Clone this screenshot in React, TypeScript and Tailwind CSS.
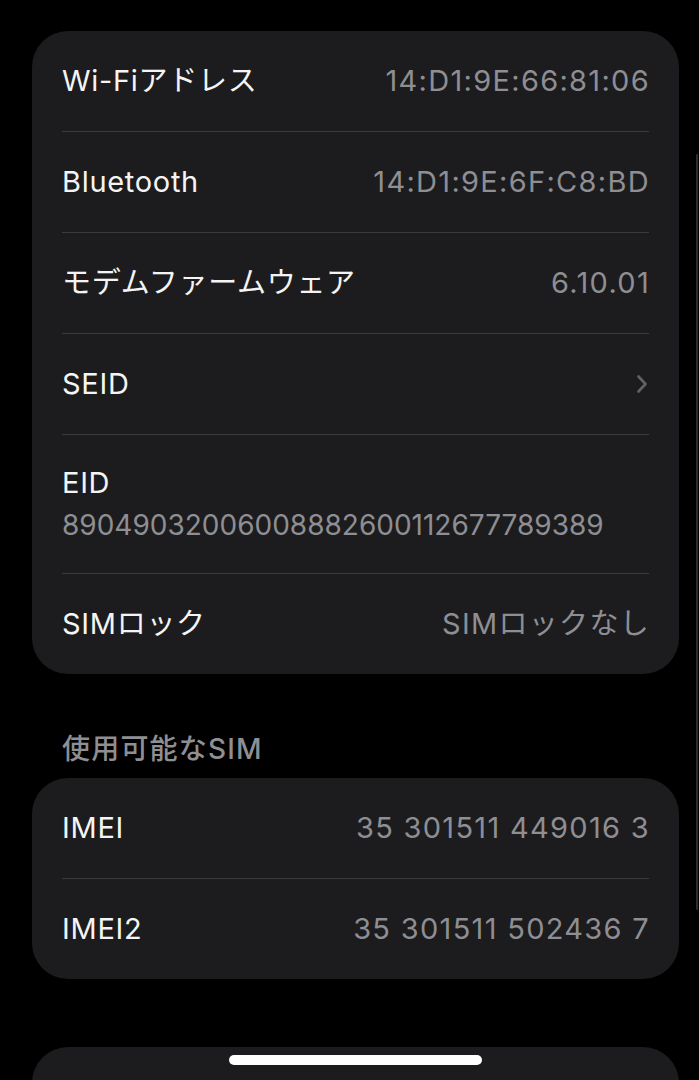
import React from "react";

const font = {
  fontFamily: "Inter, 'Noto Sans CJK JP', sans-serif",
};

type Row = { label: string; value?: string; chevron?: boolean; sub?: string };

const mainRows: Row[] = [
  { label: "Wi-Fiアドレス", value: "14:D1:9E:66:81:06" },
  { label: "Bluetooth", value: "14:D1:9E:6F:C8:BD" },
  { label: "モデムファームウェア", value: "6.10.01" },
  { label: "SEID", chevron: true },
  { label: "EID", sub: "89049032006008882600112677789389" },
  { label: "SIMロック", value: "SIMロックなし" },
];

const simRows: Row[] = [
  { label: "IMEI", value: "35 301511 449016 3" },
  { label: "IMEI2", value: "35 301511 502436 7" },
];

function Chevron() {
  return (
    <svg width="12" height="20" viewBox="0 0 12 20" fill="none" className="mr-[1px]">
      <path
        d="M2.5 2.5 L9.5 10 L2.5 17.5"
        stroke="#616166"
        strokeWidth="2.6"
        strokeLinecap="round"
        strokeLinejoin="round"
      />
    </svg>
  );
}

function RowItem({ row, last }: { row: Row; last: boolean }) {
  return (
    <div className="px-[30px]">
      {row.sub ? (
        <div className="flex h-[138px] flex-col justify-center">
          <div className="text-[29px] leading-[34px] tracking-[0.7px] text-[#f4f4f5]">{row.label}</div>
          <div className="mt-[8px] text-[28px] leading-[34px] text-[#8e8e93]">{row.sub}</div>
        </div>
      ) : (
        <div className="flex h-[100px] items-center justify-between">
          <span className="text-[29px] tracking-[0.7px] text-[#f4f4f5]">{row.label}</span>
          {row.chevron ? (
            <Chevron />
          ) : (
            <span className="-mr-[1px] text-[29px] tracking-[1.3px] text-[#8e8e93]">{row.value}</span>
          )}
        </div>
      )}
      {!last && <div className="h-px bg-[#3a3a3c]" />}
    </div>
  );
}

function Card({ rows }: { rows: Row[] }) {
  return (
    <div className="rounded-[36px] bg-[#1c1c1e]">
      {rows.map((r, i) => (
        <RowItem key={r.label} row={r} last={i === rows.length - 1} />
      ))}
    </div>
  );
}

export default function App() {
  return (
    <div className="relative h-[1080px] w-[699px] overflow-hidden bg-black" style={font}>
      <div className="pl-[32px] pr-[20px] pt-[31px]">
        <Card rows={mainRows} />

        <div className="mt-[59px] mb-[13px] pl-[30px] text-[28px] font-medium leading-[32px] tracking-[1.2px] text-[#8e8e93]">
          使用可能なSIM
        </div>

        <Card rows={simRows} />

        <div className="mt-[68px] h-[120px] rounded-t-[36px] bg-[#1c1c1e]" />
      </div>

      {/* scroll indicator */}
      <div className="absolute right-[1px] top-[154px] h-[756px] w-[2px] rounded-full bg-[#2c2c2e]" />

      {/* home indicator */}
      <div className="absolute left-[229px] top-[1055px] h-[10px] w-[253px] rounded-full bg-white" />
    </div>
  );
}
